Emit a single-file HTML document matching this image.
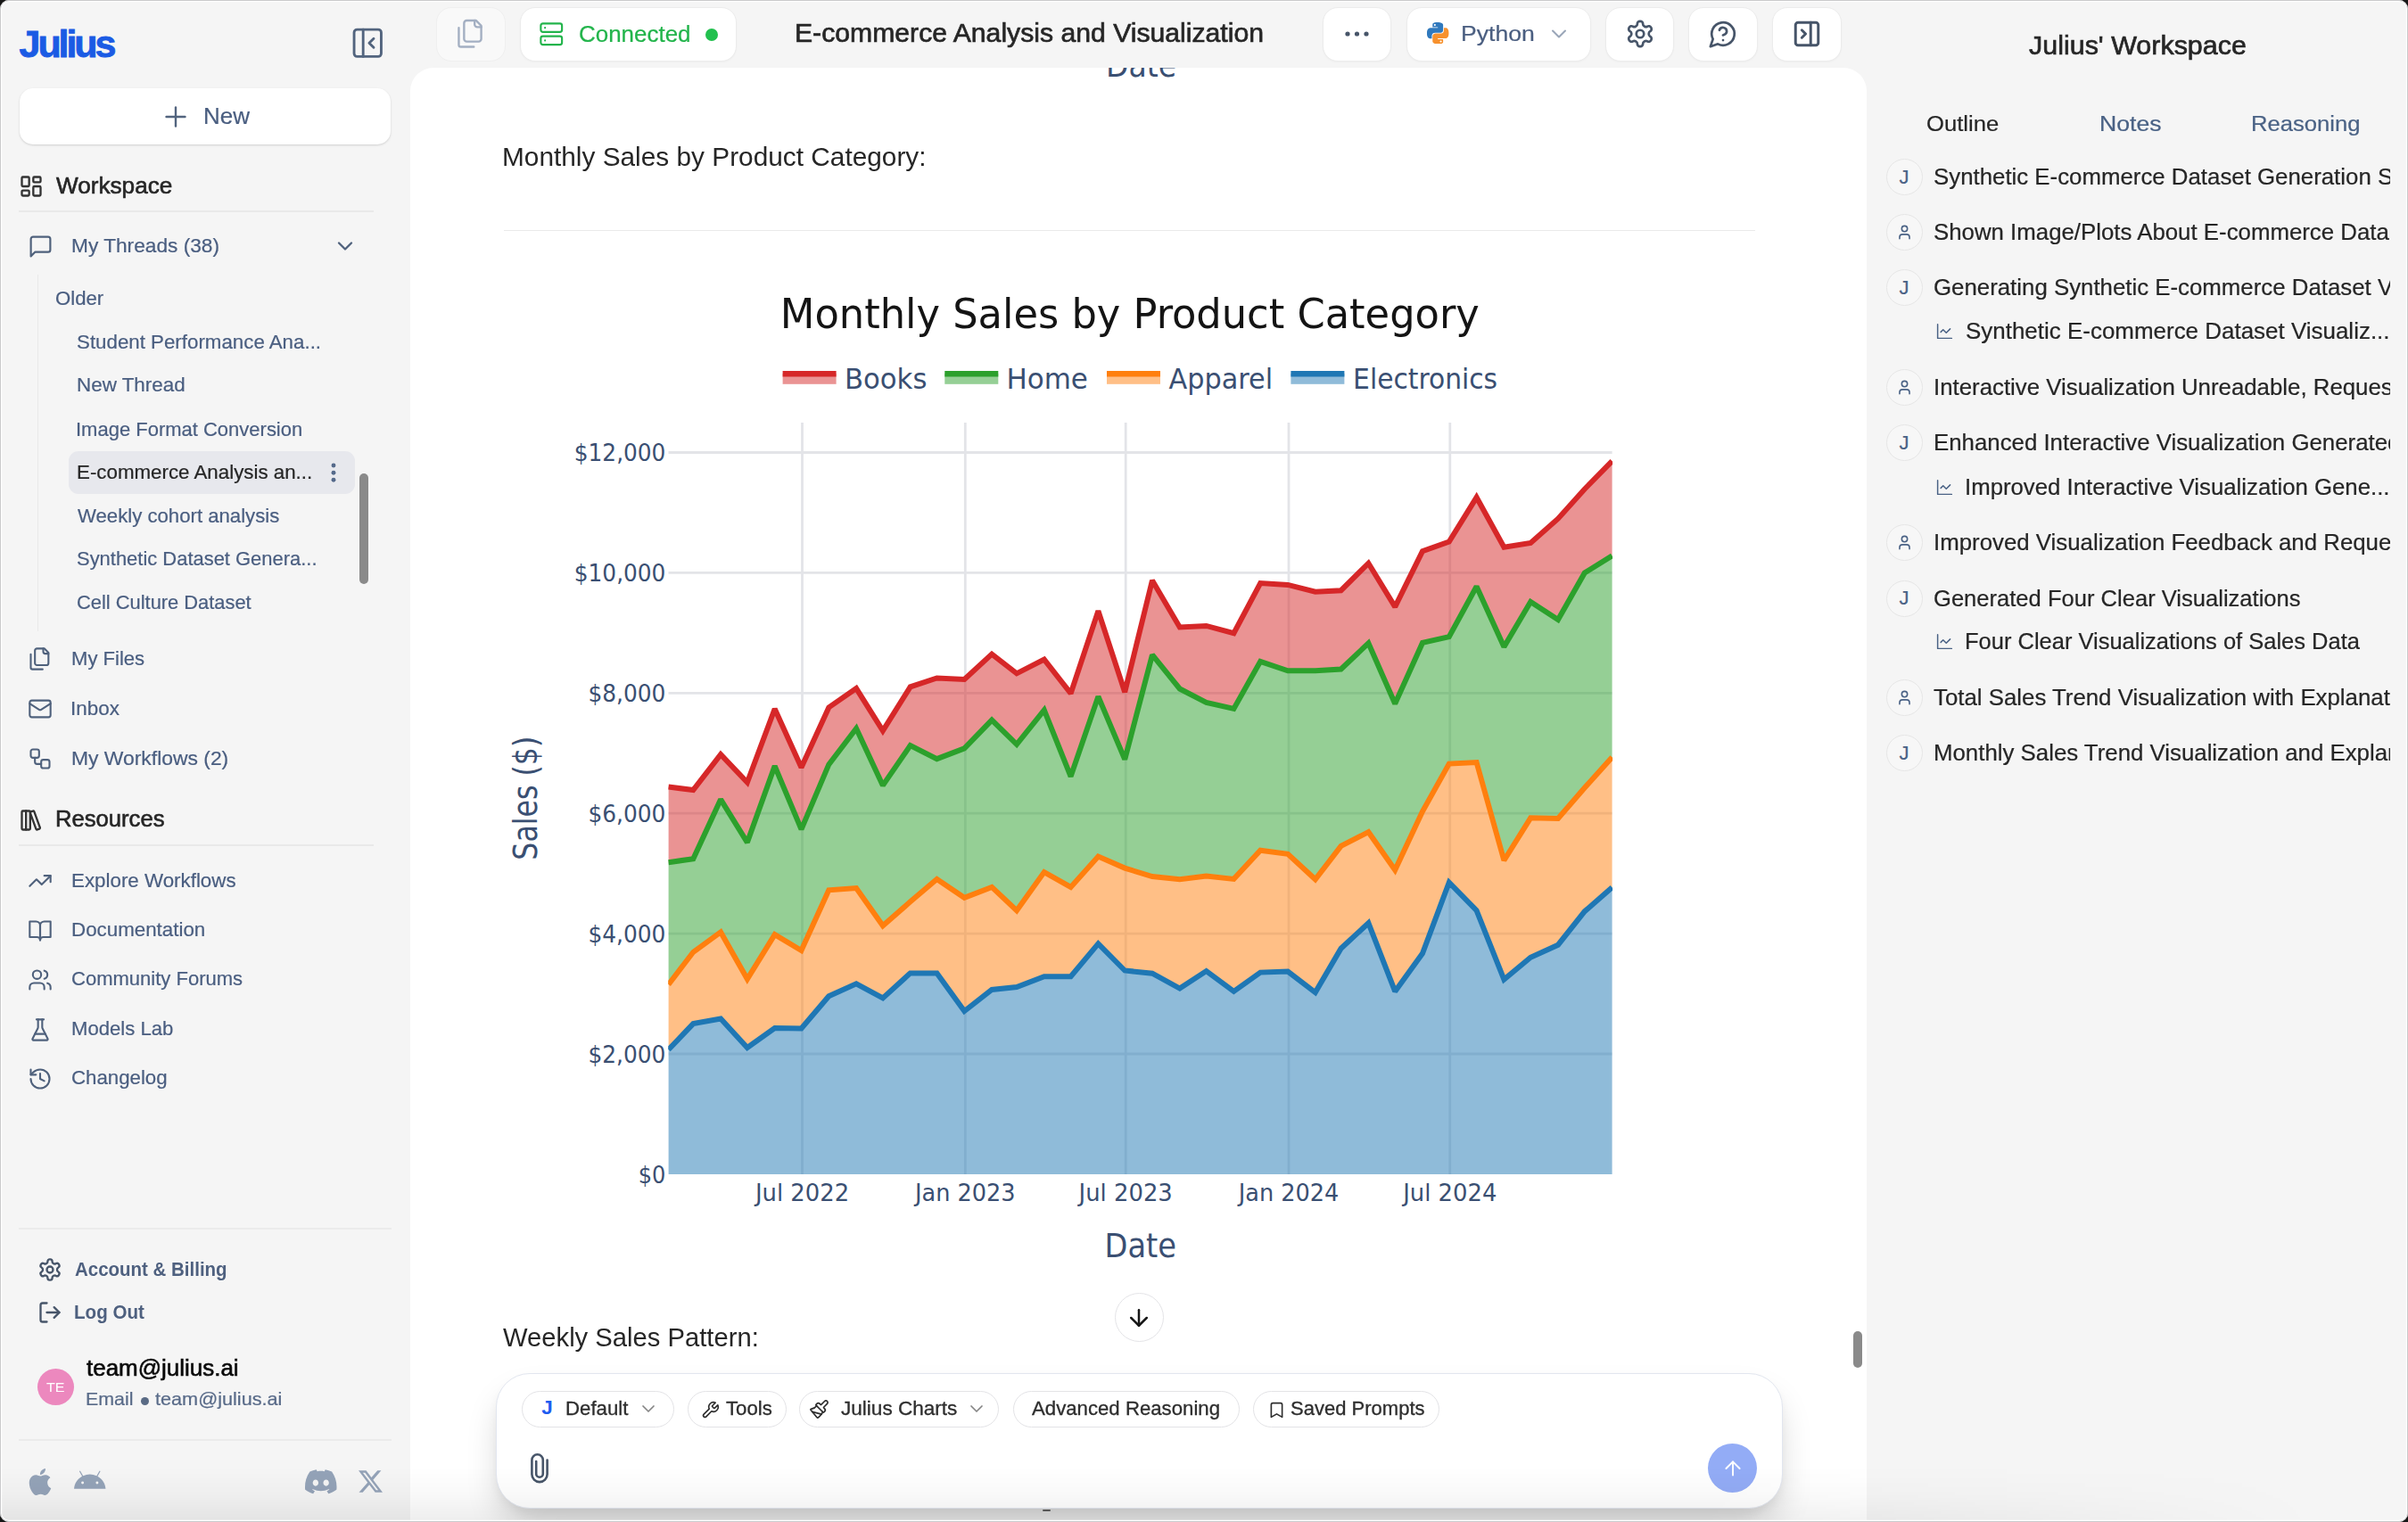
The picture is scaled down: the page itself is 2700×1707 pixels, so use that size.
<!DOCTYPE html><html lang="en"><head><meta charset="utf-8"><title>Julius - E-commerce Analysis and Visualization</title><style>
*{box-sizing:border-box}
html,body{margin:0;padding:0}
body{width:2700px;height:1707px;overflow:hidden;background:#161616;font-family:"Liberation Sans",sans-serif;position:relative}
#win{position:absolute;left:0;top:0;width:2700px;height:1707px;background:#f5f5f5;border-radius:10px;overflow:hidden}
#winb{position:absolute;left:0;top:0;width:2700px;height:1707px;border-radius:10px;border:1px solid #c9c9cb;box-shadow:inset 0 0 0 1.2px #fff;pointer-events:none}
.abs{position:absolute}
.t{position:absolute;white-space:nowrap;line-height:1;transform-origin:0 0}
#main{position:absolute;left:460px;top:76px;width:1633.3px;height:1640px;background:#fff;border-radius:26px 26px 0 0;overflow:hidden}
.btn{position:absolute;top:8px;height:61px;border-radius:17px;background:#fff;border:1.5px solid #ececec;box-shadow:0 1px 2px rgba(0,0,0,.03)}
.hr{position:absolute;height:2px;background:#e9e9e9}
.pill{position:absolute;top:1560px;height:41px;border-radius:21px;border:1.5px solid #e3e3e6;background:#fff}
.circ{position:absolute;width:41px;height:41px;border-radius:50%;border:1.5px solid #e6e6e6;background:#f7f7f7}
</style></head><body><div id="win">
<div id="main"></div>
<span class="t" id="logo" style="left:21.6px;top:27.5px;font-size:43px;color:#1b5be4;font-weight:700;-webkit-text-stroke:0.9px #1b5be4;letter-spacing:-3.1px;">Julius</span>
<svg style="position:absolute;left:391.5px;top:28.3px;" width="40.5" height="40.5" viewBox="0 0 24 24" fill="none" stroke="#52647e" stroke-width="1.7" stroke-linecap="round" stroke-linejoin="round"><rect width="18" height="18" x="3" y="3" rx="2"/><path d="M9 3v18"/><path d="m16 15-3-3 3-3"/></svg>
<div class="abs" style="left:22px;top:99px;width:416px;height:63px;border-radius:15px;background:#fff;box-shadow:0 1px 3px rgba(0,0,0,.10),0 1px 2px rgba(0,0,0,.06)"></div>
<svg style="position:absolute;left:179.2px;top:112.5px;" width="36" height="36" viewBox="0 0 24 24" fill="none" stroke="#52647e" stroke-width="1.6" stroke-linecap="round" stroke-linejoin="round"><path d="M5 12h14"/><path d="M12 5v14"/></svg>
<span class="t" id="new" style="left:227.6px;top:118.0px;font-size:25.4px;color:#4a5e80;transform:scaleX(1.0226);-webkit-text-stroke:0.22px #4a5e80;">New</span>
<svg style="position:absolute;left:20.5px;top:194.5px;" width="28" height="28" viewBox="0 0 24 24" fill="none" stroke="#333" stroke-width="2" stroke-linecap="round" stroke-linejoin="round"><rect width="7" height="9" x="3" y="3" rx="1"/><rect width="7" height="5" x="14" y="3" rx="1"/><rect width="7" height="9" x="14" y="12" rx="1"/><rect width="7" height="5" x="3" y="16" rx="1"/></svg>
<span class="t" id="ws" style="left:63.2px;top:195.9px;font-size:25.4px;color:#262626;transform:scaleX(1.0297);-webkit-text-stroke:0.6px #262626;">Workspace</span>
<div class="hr" style="left:21px;top:236.3px;width:398px;height:1.6px;background:#e9e9e9"></div>
<svg style="position:absolute;left:30.5px;top:262.0px;" width="29" height="29" viewBox="0 0 24 24" fill="none" stroke="#4f617c" stroke-width="1.8" stroke-linecap="round" stroke-linejoin="round"><path d="M21 15a2 2 0 0 1-2 2H7l-4 4V5a2 2 0 0 1 2-2h14a2 2 0 0 1 2 2z"/></svg>
<span class="t" id="thr" style="left:79.8px;top:265.0px;font-size:21.7px;color:#4a5e80;transform:scaleX(1.0461);-webkit-text-stroke:0.22px #4a5e80;">My Threads (38)</span>
<svg style="position:absolute;left:373.0px;top:262.3px;" width="28" height="28" viewBox="0 0 24 24" fill="none" stroke="#4f617c" stroke-width="2" stroke-linecap="round" stroke-linejoin="round"><path d="m6 9 6 6 6-6"/></svg>
<div class="abs" style="left:41.5px;top:308px;width:1.5px;height:400px;background:#e9e9e9"></div>
<span class="t" id="older" style="left:62.0px;top:324.3px;font-size:21.7px;color:#4a5e80;transform:scaleX(1.0204);-webkit-text-stroke:0.22px #4a5e80;">Older</span>
<div class="abs" style="left:76.5px;top:506px;width:321px;height:48px;border-radius:11px;background:#e7e8ed"></div>
<span class="t" id="th0" style="left:86.4px;top:372.6px;font-size:21.7px;color:#4a5e80;transform:scaleX(1.0285);-webkit-text-stroke:0.22px #4a5e80;">Student Performance Ana...</span>
<span class="t" id="th1" style="left:86.4px;top:421.2px;font-size:21.7px;color:#4a5e80;transform:scaleX(1.0331);-webkit-text-stroke:0.22px #4a5e80;">New Thread</span>
<span class="t" id="th2" style="left:85.4px;top:470.5px;font-size:21.7px;color:#4a5e80;transform:scaleX(1.0140);-webkit-text-stroke:0.22px #4a5e80;">Image Format Conversion</span>
<span class="t" id="th3" style="left:86.4px;top:518.9px;font-size:21.7px;color:#262626;transform:scaleX(1.0292);-webkit-text-stroke:0.22px #262626;">E-commerce Analysis an...</span>
<span class="t" id="th4" style="left:87.4px;top:567.8px;font-size:21.7px;color:#4a5e80;transform:scaleX(1.0222);-webkit-text-stroke:0.22px #4a5e80;">Weekly cohort analysis</span>
<span class="t" id="th5" style="left:86.4px;top:616.2px;font-size:21.7px;color:#4a5e80;transform:scaleX(1.0116);-webkit-text-stroke:0.22px #4a5e80;">Synthetic Dataset Genera...</span>
<span class="t" id="th6" style="left:86.4px;top:665.2px;font-size:21.7px;color:#4a5e80;transform:scaleX(1.0084);-webkit-text-stroke:0.22px #4a5e80;">Cell Culture Dataset</span>
<svg class="abs" style="left:361.8px;top:517px" width="24" height="26" viewBox="0 0 24 26"><circle cx="12" cy="5" r="2.45" fill="#54698a"/><circle cx="12" cy="13.3" r="2.45" fill="#54698a"/><circle cx="12" cy="21.3" r="2.45" fill="#54698a"/></svg>
<div class="abs" style="left:403.3px;top:531px;width:10px;height:124px;border-radius:5px;background:#8a8a8a"></div>
<svg style="position:absolute;left:30.5px;top:725.0px;" width="28" height="28" viewBox="0 0 24 24" fill="none" stroke="#4f617c" stroke-width="1.8" stroke-linecap="round" stroke-linejoin="round"><path d="M20 7h-3a2 2 0 0 1-2-2V2"/><path d="M9 18a2 2 0 0 1-2-2V4a2 2 0 0 1 2-2h7l4 4v10a2 2 0 0 1-2 2Z"/><path d="M3 7.6v12.8A1.6 1.6 0 0 0 4.6 22h9.8"/></svg>
<span class="t" id="nav0" style="left:79.8px;top:727.9px;font-size:21.7px;color:#4a5e80;transform:scaleX(1.0173);-webkit-text-stroke:0.22px #4a5e80;">My Files</span>
<svg style="position:absolute;left:30.5px;top:780.7px;" width="28" height="28" viewBox="0 0 24 24" fill="none" stroke="#4f617c" stroke-width="1.8" stroke-linecap="round" stroke-linejoin="round"><rect width="20" height="16" x="2" y="4" rx="2"/><path d="m22 7-8.97 5.7a1.94 1.94 0 0 1-2.06 0L2 7"/></svg>
<span class="t" id="nav1" style="left:78.8px;top:783.6px;font-size:21.7px;color:#4a5e80;transform:scaleX(1.0342);-webkit-text-stroke:0.22px #4a5e80;">Inbox</span>
<svg style="position:absolute;left:30.5px;top:836.6px;" width="28" height="28" viewBox="0 0 24 24" fill="none" stroke="#4f617c" stroke-width="1.8" stroke-linecap="round" stroke-linejoin="round"><rect width="8" height="8" x="3" y="3" rx="2"/><path d="M7 11v4a2 2 0 0 0 2 2h4"/><rect width="8" height="8" x="13" y="13" rx="2"/></svg>
<span class="t" id="nav2" style="left:79.8px;top:839.5px;font-size:21.7px;color:#4a5e80;transform:scaleX(1.0547);-webkit-text-stroke:0.22px #4a5e80;">My Workflows (2)</span>
<svg style="position:absolute;left:20.5px;top:905.5px;" width="28" height="28" viewBox="0 0 24 24" fill="none" stroke="#333" stroke-width="2" stroke-linecap="round" stroke-linejoin="round"><rect width="8" height="18" x="3" y="3" rx="1"/><path d="M7 3v18"/><path d="M20.4 18.9c.2.5-.1 1.1-.6 1.3l-1.9.7c-.5.2-1.1-.1-1.3-.6L11.1 5.1c-.2-.5.1-1.1.6-1.3l1.9-.7c.5-.2 1.1.1 1.3.6Z"/></svg>
<span class="t" id="res" style="left:61.8px;top:906.3px;font-size:25.4px;color:#262626;transform:scaleX(1.0094);-webkit-text-stroke:0.6px #262626;">Resources</span>
<div class="hr" style="left:21px;top:947.3px;width:398px;height:1.6px;background:#e9e9e9"></div>
<svg style="position:absolute;left:30.5px;top:973.9px;" width="28" height="28" viewBox="0 0 24 24" fill="none" stroke="#4f617c" stroke-width="1.8" stroke-linecap="round" stroke-linejoin="round"><polyline points="22 7 13.5 15.5 8.5 10.5 2 17"/><polyline points="16 7 22 7 22 13"/></svg>
<span class="t" id="nv20" style="left:79.8px;top:976.5px;font-size:21.7px;color:#4a5e80;transform:scaleX(1.0303);-webkit-text-stroke:0.22px #4a5e80;">Explore Workflows</span>
<svg style="position:absolute;left:30.5px;top:1029.5px;" width="28" height="28" viewBox="0 0 24 24" fill="none" stroke="#4f617c" stroke-width="1.8" stroke-linecap="round" stroke-linejoin="round"><path d="M2 3h6a4 4 0 0 1 4 4v14a3 3 0 0 0-3-3H2z"/><path d="M22 3h-6a4 4 0 0 0-4 4v14a3 3 0 0 1 3-3h7z"/></svg>
<span class="t" id="nv21" style="left:79.8px;top:1032.1px;font-size:21.7px;color:#4a5e80;transform:scaleX(1.0298);-webkit-text-stroke:0.22px #4a5e80;">Documentation</span>
<svg style="position:absolute;left:30.5px;top:1084.8px;" width="28" height="28" viewBox="0 0 24 24" fill="none" stroke="#4f617c" stroke-width="1.8" stroke-linecap="round" stroke-linejoin="round"><path d="M16 21v-2a4 4 0 0 0-4-4H6a4 4 0 0 0-4 4v2"/><circle cx="9" cy="7" r="4"/><path d="M22 21v-2a4 4 0 0 0-3-3.87"/><path d="M16 3.13a4 4 0 0 1 0 7.75"/></svg>
<span class="t" id="nv22" style="left:79.8px;top:1087.4px;font-size:21.7px;color:#4a5e80;transform:scaleX(1.0154);-webkit-text-stroke:0.22px #4a5e80;">Community Forums</span>
<svg style="position:absolute;left:30.5px;top:1140.7px;" width="28" height="28" viewBox="0 0 24 24" fill="none" stroke="#4f617c" stroke-width="1.8" stroke-linecap="round" stroke-linejoin="round"><path d="M10 2v7.527a2 2 0 0 1-.211.896L4.72 20.55a1 1 0 0 0 .9 1.45h12.76a1 1 0 0 0 .9-1.45l-5.069-10.127A2 2 0 0 1 14 9.527V2"/><path d="M8.5 2h7"/><path d="M7 16h10"/></svg>
<span class="t" id="nv23" style="left:79.8px;top:1143.3px;font-size:21.7px;color:#4a5e80;transform:scaleX(1.0195);-webkit-text-stroke:0.22px #4a5e80;">Models Lab</span>
<svg style="position:absolute;left:30.5px;top:1195.7px;" width="28" height="28" viewBox="0 0 24 24" fill="none" stroke="#4f617c" stroke-width="1.8" stroke-linecap="round" stroke-linejoin="round"><path d="M3 12a9 9 0 1 0 9-9 9.75 9.75 0 0 0-6.74 2.74L3 8"/><path d="M3 3v5h5"/><path d="M12 7v5l4 2"/></svg>
<span class="t" id="nv24" style="left:79.8px;top:1198.3px;font-size:21.7px;color:#4a5e80;transform:scaleX(1.0251);-webkit-text-stroke:0.22px #4a5e80;">Changelog</span>
<div class="hr" style="left:21px;top:1376.5px;width:418px;background:#ebebeb"></div>
<svg style="position:absolute;left:41.5px;top:1409.5px;" width="28" height="28" viewBox="0 0 24 24" fill="none" stroke="#475569" stroke-width="2" stroke-linecap="round" stroke-linejoin="round"><path d="M12.22 2h-.44a2 2 0 0 0-2 2v.18a2 2 0 0 1-1 1.73l-.43.25a2 2 0 0 1-2 0l-.15-.08a2 2 0 0 0-2.73.73l-.22.38a2 2 0 0 0 .73 2.73l.15.1a2 2 0 0 1 1 1.72v.51a2 2 0 0 1-1 1.74l-.15.09a2 2 0 0 0-.73 2.73l.22.38a2 2 0 0 0 2.73.73l.15-.08a2 2 0 0 1 2 0l.43.25a2 2 0 0 1 1 1.73V20a2 2 0 0 0 2 2h.44a2 2 0 0 0 2-2v-.18a2 2 0 0 1 1-1.73l.43-.25a2 2 0 0 1 2 0l.15.08a2 2 0 0 0 2.73-.73l.22-.39a2 2 0 0 0-.73-2.73l-.15-.08a2 2 0 0 1-1-1.74v-.5a2 2 0 0 1 1-1.74l.15-.09a2 2 0 0 0 .73-2.73l-.22-.38a2 2 0 0 0-2.73-.73l-.15.08a2 2 0 0 1-2 0l-.43-.25a2 2 0 0 1-1-1.73V4a2 2 0 0 0-2-2z"/><circle cx="12" cy="12" r="3"/></svg>
<span class="t" id="acct" style="left:83.8px;top:1412.5px;font-size:21.7px;color:#4e607f;font-weight:700;transform:scaleX(0.9440);">Account &amp; Billing</span>
<svg style="position:absolute;left:41.5px;top:1458.0px;" width="28" height="28" viewBox="0 0 24 24" fill="none" stroke="#475569" stroke-width="2" stroke-linecap="round" stroke-linejoin="round"><path d="M9 21H5a2 2 0 0 1-2-2V5a2 2 0 0 1 2-2h4"/><polyline points="16 17 21 12 16 7"/><line x1="21" x2="9" y1="12" y2="12"/></svg>
<span class="t" id="logout" style="left:82.8px;top:1460.7px;font-size:21.7px;color:#4e607f;font-weight:700;transform:scaleX(0.9483);">Log Out</span>
<div class="abs" style="left:42px;top:1535px;width:41px;height:41px;border-radius:50%;background:#ec88be"></div>
<span class="t" id="te" style="left:52.0px;top:1548.4px;font-size:15.5px;color:#fff;transform:scaleX(1.0367);">TE</span>
<span class="t" id="team" style="left:97.4px;top:1521.7px;font-size:25.4px;color:#0a0a0a;transform:scaleX(1.0222);-webkit-text-stroke:0.6px #0a0a0a;">team@julius.ai</span>
<span class="t" id="email" style="left:96.2px;top:1558.9px;font-size:20.6px;color:#586a88;transform:scaleX(1.0380);-webkit-text-stroke:0.22px #586a88;">Email</span>
<div class="abs" style="left:157.5px;top:1566.5px;width:9px;height:9px;border-radius:50%;background:#5a6b85"></div>
<span class="t" id="team2" style="left:174.0px;top:1558.9px;font-size:20.6px;color:#586a88;transform:scaleX(1.0519);-webkit-text-stroke:0.22px #586a88;">team@julius.ai</span>
<div class="hr" style="left:21px;top:1614px;width:418px;background:#ebebeb"></div>
<svg class="abs" style="left:30px;top:1646.5px" width="30" height="30" viewBox="0 0 24 24"><path fill="#94a3b8" d="M12.152 6.896c-.948 0-2.415-1.078-3.96-1.04-2.04.027-3.91 1.183-4.961 3.014-2.117 3.675-.546 9.103 1.519 12.09 1.013 1.454 2.208 3.09 3.792 3.039 1.52-.065 2.09-.987 3.935-.987 1.831 0 2.35.987 3.96.948 1.637-.026 2.676-1.48 3.676-2.948 1.156-1.688 1.636-3.325 1.662-3.415-.039-.013-3.182-1.221-3.22-4.857-.026-3.04 2.48-4.494 2.597-4.559-1.429-2.09-3.623-2.324-4.39-2.376-2-.156-3.675 1.09-4.61 1.09zM15.53 3.83c.843-1.012 1.4-2.427 1.245-3.83-1.207.052-2.662.805-3.532 1.818-.78.896-1.454 2.338-1.273 3.714 1.338.104 2.715-.688 3.559-1.701"/></svg>
<svg class="abs" style="left:83px;top:1645.8px" width="35.5" height="31.5" viewBox="0 0 576 512"><path fill="#94a3b8" d="M420.55,301.93a24,24,0,1,1,24-24,24,24,0,0,1-24,24m-265.1,0a24,24,0,1,1,24-24,24,24,0,0,1-24,24m273.7-144.48,47.94-83a10,10,0,1,0-17.27-10h0l-48.54,84.07a301.25,301.25,0,0,0-246.56,0L116.18,64.45a10,10,0,1,0-17.27,10h0l47.94,83C64.53,202.22,8.24,285.55,0,384H576c-8.24-98.45-64.54-181.78-146.85-226.55"/></svg>
<svg class="abs" style="left:342px;top:1643.5px" width="35.5" height="35.5" viewBox="0 0 24 24"><path fill="#94a3b8" d="M20.317 4.3698a19.7913 19.7913 0 00-4.8851-1.5152.0741.0741 0 00-.0785.0371c-.211.3753-.4447.8648-.6083 1.2495-1.8447-.2762-3.68-.2762-5.4868 0-.1636-.3933-.4058-.8742-.6177-1.2495a.077.077 0 00-.0785-.037 19.7363 19.7363 0 00-4.8852 1.515.0699.0699 0 00-.0321.0277C.5334 9.0458-.319 13.5799.0992 18.0578a.0824.0824 0 00.0312.0561c2.0528 1.5076 4.0413 2.4228 5.9929 3.0294a.0777.0777 0 00.0842-.0276c.4616-.6304.8731-1.2952 1.226-1.9942a.076.076 0 00-.0416-.1057c-.6528-.2476-1.2743-.5495-1.8722-.8923a.077.077 0 01-.0076-.1277c.1258-.0943.2517-.1923.3718-.2914a.0743.0743 0 01.0776-.0105c3.9278 1.7933 8.18 1.7933 12.0614 0a.0739.0739 0 01.0785.0095c.1202.099.246.1981.3728.2924a.077.077 0 01-.0066.1276 12.2986 12.2986 0 01-1.873.8914.0766.0766 0 00-.0407.1067c.3604.698.7719 1.3628 1.225 1.9932a.076.076 0 00.0842.0286c1.961-.6067 3.9495-1.5219 6.0023-3.0294a.077.077 0 00.0313-.0552c.5004-5.177-.8382-9.6739-3.5485-13.6604a.061.061 0 00-.0312-.0286zM8.02 15.3312c-1.1825 0-2.1569-1.0857-2.1569-2.419 0-1.3332.9555-2.4189 2.157-2.4189 1.2108 0 2.1757 1.0952 2.1568 2.419 0 1.3332-.9555 2.4189-2.1569 2.4189zm7.9748 0c-1.1825 0-2.1569-1.0857-2.1569-2.419 0-1.3332.9554-2.4189 2.1569-2.4189 1.2108 0 2.1757 1.0952 2.1568 2.419 0 1.3332-.946 2.4189-2.1568 2.4189Z"/></svg>
<svg class="abs" style="left:401.5px;top:1648px" width="27" height="27" viewBox="0 0 24 24"><path fill="#94a3b8" d="M18.901 1.153h3.68l-8.04 9.19L24 22.846h-7.406l-5.8-7.584-6.638 7.584H.474l8.6-9.83L0 1.154h7.594l5.243 6.932ZM17.61 20.644h2.039L6.486 3.24H4.298Z"/></svg>
<div class="btn" style="left:489.3px;width:78px;background:#f9f9f9;border-color:#efefef;box-shadow:none"></div>
<svg style="position:absolute;left:510.3px;top:20.3px;" width="35.5" height="35.5" viewBox="0 0 24 24" fill="none" stroke="#a3afc2" stroke-width="1.6" stroke-linecap="round" stroke-linejoin="round"><path d="M20 7h-3a2 2 0 0 1-2-2V2"/><path d="M9 18a2 2 0 0 1-2-2V4a2 2 0 0 1 2-2h7l4 4v10a2 2 0 0 1-2 2Z"/><path d="M3 7.6v12.8A1.6 1.6 0 0 0 4.6 22h9.8"/></svg>
<div class="btn" style="left:583.2px;width:243px"></div>
<svg style="position:absolute;left:604.2px;top:24.2px;" width="28.5" height="28.5" viewBox="0 0 24 24" fill="none" stroke="#22b44b" stroke-width="1.8" stroke-linecap="round" stroke-linejoin="round"><rect width="20" height="8" x="2" y="2" rx="2" ry="2"/><rect width="20" height="8" x="2" y="14" rx="2" ry="2"/><line x1="6" x2="6.01" y1="6" y2="6"/><line x1="6" x2="6.01" y1="18" y2="18"/></svg>
<span class="t" id="conn" style="left:648.8px;top:25.6px;font-size:24.9px;color:#22b44b;transform:scaleX(1.0427);-webkit-text-stroke:0.22px #22b44b;">Connected</span>
<div class="abs" style="left:790.5px;top:31.5px;width:14px;height:14px;border-radius:50%;background:#22c04e"></div>
<span class="t" id="title" style="left:890.6px;top:22.9px;font-size:29.2px;color:#262626;transform:scaleX(1.0337);-webkit-text-stroke:0.65px #262626;">E-commerce Analysis and Visualization</span>
<div class="btn" style="left:1482.5px;width:77.5px"></div>
<svg class="abs" style="left:1506px;top:33px" width="32" height="10" viewBox="0 0 32 10"><circle cx="5" cy="5" r="2.6" fill="#475569"/><circle cx="15.5" cy="5" r="2.6" fill="#475569"/><circle cx="26" cy="5" r="2.6" fill="#475569"/></svg>
<div class="btn" style="left:1576.5px;width:207px"></div>
<svg class="abs" style="left:1600.3px;top:24.6px" width="24.4" height="24.4" viewBox="0 0 24 24"><path fill="#3079bd" fill-rule="evenodd" d="M14.25.18l.9.2.73.26.59.3.45.32.34.34.25.34.16.33.1.3.04.26.02.2-.01.13V8.5l-.05.63-.13.55-.21.46-.26.38-.3.31-.33.25-.35.19-.35.14-.33.1-.3.07-.26.04-.21.02H8.77l-.69.05-.59.14-.5.22-.41.27-.33.32-.27.35-.2.36-.15.37-.1.35-.07.32-.04.27-.02.21v3.06H3.17l-.21-.03-.28-.07-.32-.12-.35-.18-.36-.26-.36-.36-.35-.46-.32-.59-.28-.73-.21-.88-.14-1.05-.05-1.23.06-1.22.16-1.04.24-.87.32-.71.36-.57.4-.44.42-.33.42-.24.4-.16.36-.1.32-.05.24-.01h.16l.06.01h8.16v-.83H6.18l-.01-2.75-.02-.37.05-.34.11-.31.17-.28.25-.26.31-.23.38-.2.44-.18.51-.15.58-.12.64-.1.71-.06.77-.04.84-.02 1.27.05zM7.95 2.16l-.23.33-.08.41.08.41.23.34.33.22.41.09.41-.09.33-.22.23-.34.08-.41-.08-.41-.23-.33-.33-.22-.41-.09-.41.09z"/><path fill="#f7912d" fill-rule="evenodd" d="M21.04 6.11l.28.06.32.12.35.18.36.27.36.35.35.47.32.59.28.73.21.88.14 1.04.05 1.23-.06 1.23-.16 1.04-.24.86-.32.71-.36.57-.4.45-.42.33-.42.24-.4.16-.36.09-.32.05-.24.02-.16-.01h-8.22v.82h5.84l.01 2.76.02.36-.05.34-.11.31-.17.29-.25.25-.31.24-.38.2-.44.17-.51.15-.58.13-.64.09-.71.07-.77.04-.84.01-1.27-.04-1.07-.14-.9-.2-.73-.25-.59-.3-.45-.33-.34-.34-.25-.34-.16-.33-.1-.3-.04-.25-.02-.2.01-.13v-5.34l.05-.64.13-.54.21-.46.26-.38.3-.32.33-.24.35-.2.35-.14.33-.1.3-.06.26-.04.21-.02.13-.01h5.84l.69-.05.59-.14.5-.21.41-.28.33-.32.27-.35.2-.36.15-.36.1-.35.07-.32.04-.28.02-.21V6.07h2.09l.14.01zM14.57 20.36l-.23.33-.08.41.08.41.23.33.33.23.41.08.41-.08.33-.23.23-.33.08-.41-.08-.41-.23-.33-.33-.23-.41-.08-.41.08z"/></svg>
<span class="t" id="py" style="left:1638.2px;top:25.9px;font-size:24.8px;color:#4a5e80;transform:scaleX(1.0718);-webkit-text-stroke:0.22px #4a5e80;">Python</span>
<svg style="position:absolute;left:1734.0px;top:24.0px;" width="28" height="28" viewBox="0 0 24 24" fill="none" stroke="#9aa6b8" stroke-width="1.8" stroke-linecap="round" stroke-linejoin="round"><path d="m6 9 6 6 6-6"/></svg>
<div class="btn" style="left:1799.5px;width:77.5px"></div>
<svg style="position:absolute;left:1821.5px;top:21.0px;" width="34" height="34" viewBox="0 0 24 24" fill="none" stroke="#475569" stroke-width="1.9" stroke-linecap="round" stroke-linejoin="round"><path d="M12.22 2h-.44a2 2 0 0 0-2 2v.18a2 2 0 0 1-1 1.73l-.43.25a2 2 0 0 1-2 0l-.15-.08a2 2 0 0 0-2.73.73l-.22.38a2 2 0 0 0 .73 2.73l.15.1a2 2 0 0 1 1 1.72v.51a2 2 0 0 1-1 1.74l-.15.09a2 2 0 0 0-.73 2.73l.22.38a2 2 0 0 0 2.73.73l.15-.08a2 2 0 0 1 2 0l.43.25a2 2 0 0 1 1 1.73V20a2 2 0 0 0 2 2h.44a2 2 0 0 0 2-2v-.18a2 2 0 0 1 1-1.73l.43-.25a2 2 0 0 1 2 0l.15.08a2 2 0 0 0 2.73-.73l.22-.39a2 2 0 0 0-.73-2.73l-.15-.08a2 2 0 0 1-1-1.74v-.5a2 2 0 0 1 1-1.74l.15-.09a2 2 0 0 0 .73-2.73l-.22-.38a2 2 0 0 0-2.73-.73l-.15.08a2 2 0 0 1-2 0l-.43-.25a2 2 0 0 1-1-1.73V4a2 2 0 0 0-2-2z"/><circle cx="12" cy="12" r="3"/></svg>
<div class="btn" style="left:1893px;width:77.5px"></div>
<svg style="position:absolute;left:1914.5px;top:21.0px;" width="34" height="34" viewBox="0 0 24 24" fill="none" stroke="#475569" stroke-width="1.9" stroke-linecap="round" stroke-linejoin="round"><path d="M7.9 20A9 9 0 1 0 4 16.1L2 22Z"/><path d="M9.09 9a3 3 0 0 1 5.83 1c0 2-3 3-3 3"/><path d="M12 17h.01"/></svg>
<div class="btn" style="left:1987px;width:77.5px"></div>
<svg style="position:absolute;left:2008.5px;top:21.0px;" width="34" height="34" viewBox="0 0 24 24" fill="none" stroke="#475569" stroke-width="2.1" stroke-linecap="round" stroke-linejoin="round"><rect width="18" height="18" x="3" y="3" rx="2"/><path d="M15 3v18"/><path d="m8 9 3 3-3 3"/></svg>
<span class="t" id="jw" style="left:2275.0px;top:36.7px;font-size:29.2px;color:#262626;transform:scaleX(1.0434);-webkit-text-stroke:0.65px #262626;">Julius' Workspace</span>
<span class="t" id="tab0" style="left:2160.2px;top:126.5px;font-size:24.8px;color:#262626;transform:scaleX(1.0352);-webkit-text-stroke:0.22px #262626;">Outline</span>
<span class="t" id="tab1" style="left:2354.2px;top:126.5px;font-size:24.8px;color:#4a6285;transform:scaleX(1.0747);-webkit-text-stroke:0.22px #4a6285;">Notes</span>
<span class="t" id="tab2" style="left:2523.8px;top:126.5px;font-size:24.8px;color:#4a6285;transform:scaleX(1.0331);-webkit-text-stroke:0.22px #4a6285;">Reasoning</span>
<div class="abs" id="rp" style="left:2100px;top:160px;width:580px;height:760px;overflow:hidden">
<div class="circ" style="left:15px;top:17.900000000000006px"></div>
<span class="t" id="oj0" style="left:29.6px;top:27.6px;font-size:22px;color:#4a6285;-webkit-text-stroke:0.22px #4a6285;">J</span>
<span class="t" id="o0" style="left:68.4px;top:25.9px;font-size:25.2px;color:#262626;transform:scaleX(1.0250);-webkit-text-stroke:0.22px #262626;">Synthetic E-commerce Dataset Generation Summary</span>
<div class="circ" style="left:15px;top:80.10000000000002px"></div>
<svg style="position:absolute;left:26.0px;top:91.1px;" width="19" height="19" viewBox="0 0 24 24" fill="none" stroke="#4a6285" stroke-width="2" stroke-linecap="round" stroke-linejoin="round"><path d="M19 21v-2a4 4 0 0 0-4-4H9a4 4 0 0 0-4 4v2"/><circle cx="12" cy="7" r="4"/></svg>
<span class="t" id="o1" style="left:68.4px;top:88.1px;font-size:25.2px;color:#262626;transform:scaleX(1.0250);-webkit-text-stroke:0.22px #262626;">Shown Image/Plots About E-commerce Data</span>
<div class="circ" style="left:15px;top:142.39999999999998px"></div>
<span class="t" id="oj2" style="left:29.6px;top:152.1px;font-size:22px;color:#4a6285;-webkit-text-stroke:0.22px #4a6285;">J</span>
<span class="t" id="o2" style="left:68.4px;top:150.4px;font-size:25.2px;color:#262626;transform:scaleX(1.0250);-webkit-text-stroke:0.22px #262626;">Generating Synthetic E-commerce Dataset Visualizations</span>
<svg style="position:absolute;left:69.5px;top:201.3px;" width="21" height="21" viewBox="0 0 24 24" fill="none" stroke="#4a6285" stroke-width="1.7" stroke-linecap="round" stroke-linejoin="round"><path d="M3 3v18h18"/><path d="m19 9-5 5-4-4-3 3"/></svg>
<span class="t" id="o3" style="left:103.6px;top:199.3px;font-size:25.2px;color:#262626;transform:scaleX(1.0304);-webkit-text-stroke:0.22px #262626;">Synthetic E-commerce Dataset Visualiz...</span>
<div class="circ" style="left:15px;top:254.10000000000002px"></div>
<svg style="position:absolute;left:26.0px;top:265.1px;" width="19" height="19" viewBox="0 0 24 24" fill="none" stroke="#4a6285" stroke-width="2" stroke-linecap="round" stroke-linejoin="round"><path d="M19 21v-2a4 4 0 0 0-4-4H9a4 4 0 0 0-4 4v2"/><circle cx="12" cy="7" r="4"/></svg>
<span class="t" id="o4" style="left:68.4px;top:262.1px;font-size:25.2px;color:#262626;transform:scaleX(1.0250);-webkit-text-stroke:0.22px #262626;">Interactive Visualization Unreadable, Request for Fix</span>
<div class="circ" style="left:15px;top:316.3px"></div>
<span class="t" id="oj5" style="left:29.6px;top:326.0px;font-size:22px;color:#4a6285;-webkit-text-stroke:0.22px #4a6285;">J</span>
<span class="t" id="o5" style="left:68.4px;top:324.3px;font-size:25.2px;color:#262626;transform:scaleX(1.0250);-webkit-text-stroke:0.22px #262626;">Enhanced Interactive Visualization Generated</span>
<svg style="position:absolute;left:69.5px;top:375.9px;" width="21" height="21" viewBox="0 0 24 24" fill="none" stroke="#4a6285" stroke-width="1.7" stroke-linecap="round" stroke-linejoin="round"><path d="M3 3v18h18"/><path d="m19 9-5 5-4-4-3 3"/></svg>
<span class="t" id="o6" style="left:102.6px;top:373.9px;font-size:25.2px;color:#262626;transform:scaleX(1.0231);-webkit-text-stroke:0.22px #262626;">Improved Interactive Visualization Gene...</span>
<div class="circ" style="left:15px;top:427.79999999999995px"></div>
<svg style="position:absolute;left:26.0px;top:438.8px;" width="19" height="19" viewBox="0 0 24 24" fill="none" stroke="#4a6285" stroke-width="2" stroke-linecap="round" stroke-linejoin="round"><path d="M19 21v-2a4 4 0 0 0-4-4H9a4 4 0 0 0-4 4v2"/><circle cx="12" cy="7" r="4"/></svg>
<span class="t" id="o7" style="left:68.4px;top:435.8px;font-size:25.2px;color:#262626;transform:scaleX(1.0250);-webkit-text-stroke:0.22px #262626;">Improved Visualization Feedback and Request</span>
<div class="circ" style="left:15px;top:490.5px"></div>
<span class="t" id="oj8" style="left:29.6px;top:500.2px;font-size:22px;color:#4a6285;-webkit-text-stroke:0.22px #4a6285;">J</span>
<span class="t" id="o8" style="left:68.4px;top:498.5px;font-size:25.2px;color:#262626;transform:scaleX(1.0149);-webkit-text-stroke:0.22px #262626;">Generated Four Clear Visualizations</span>
<svg style="position:absolute;left:69.5px;top:548.8px;" width="21" height="21" viewBox="0 0 24 24" fill="none" stroke="#4a6285" stroke-width="1.7" stroke-linecap="round" stroke-linejoin="round"><path d="M3 3v18h18"/><path d="m19 9-5 5-4-4-3 3"/></svg>
<span class="t" id="o9" style="left:102.6px;top:546.8px;font-size:25.2px;color:#262626;transform:scaleX(1.0118);-webkit-text-stroke:0.22px #262626;">Four Clear Visualizations of Sales Data</span>
<div class="circ" style="left:15px;top:601.7px"></div>
<svg style="position:absolute;left:26.0px;top:612.7px;" width="19" height="19" viewBox="0 0 24 24" fill="none" stroke="#4a6285" stroke-width="2" stroke-linecap="round" stroke-linejoin="round"><path d="M19 21v-2a4 4 0 0 0-4-4H9a4 4 0 0 0-4 4v2"/><circle cx="12" cy="7" r="4"/></svg>
<span class="t" id="o10" style="left:68.4px;top:609.7px;font-size:25.2px;color:#262626;transform:scaleX(1.0250);-webkit-text-stroke:0.22px #262626;">Total Sales Trend Visualization with Explanation</span>
<div class="circ" style="left:15px;top:664.2px"></div>
<span class="t" id="oj11" style="left:29.6px;top:673.9px;font-size:22px;color:#4a6285;-webkit-text-stroke:0.22px #4a6285;">J</span>
<span class="t" id="o11" style="left:68.4px;top:672.2px;font-size:25.2px;color:#262626;transform:scaleX(1.0250);-webkit-text-stroke:0.22px #262626;">Monthly Sales Trend Visualization and Explanation</span>
</div>
<div class="abs" style="left:461px;top:76px;width:1632.3px;height:1631px;overflow:hidden;border-radius:26px 26px 0 0">
<svg class="abs" style="left:0;top:0" width="1633" height="1631" viewBox="0 0 1633 1631" font-family='"DejaVu Sans Condensed","DejaVu Sans",sans-serif'>
<text x="818.6" y="9.6" font-size="37.2" text-anchor="middle" fill="#3a4f72" textLength="79.0" lengthAdjust="spacingAndGlyphs">Date</text>
<line x1="438.5" x2="438.5" y1="398.0" y2="1240.9" stroke="#e3e4e8" stroke-width="2.8"/>
<line x1="621.3" x2="621.3" y1="398.0" y2="1240.9" stroke="#e3e4e8" stroke-width="2.8"/>
<line x1="801.2" x2="801.2" y1="398.0" y2="1240.9" stroke="#e3e4e8" stroke-width="2.8"/>
<line x1="984.0" x2="984.0" y1="398.0" y2="1240.9" stroke="#e3e4e8" stroke-width="2.8"/>
<line x1="1164.8" x2="1164.8" y1="398.0" y2="1240.9" stroke="#e3e4e8" stroke-width="2.8"/>
<line x1="288.5" x2="1346.6" y1="1106.0" y2="1106.0" stroke="#e3e4e8" stroke-width="2.8"/>
<line x1="288.5" x2="1346.6" y1="971.1" y2="971.1" stroke="#e3e4e8" stroke-width="2.8"/>
<line x1="288.5" x2="1346.6" y1="836.2" y2="836.2" stroke="#e3e4e8" stroke-width="2.8"/>
<line x1="288.5" x2="1346.6" y1="701.3" y2="701.3" stroke="#e3e4e8" stroke-width="2.8"/>
<line x1="288.5" x2="1346.6" y1="566.4" y2="566.4" stroke="#e3e4e8" stroke-width="2.8"/>
<line x1="288.5" x2="1346.6" y1="431.5" y2="431.5" stroke="#e3e4e8" stroke-width="2.8"/>
<defs><clipPath id="plotclip"><rect x="288.2" y="398.0" width="1058.9" height="842.9"/></clipPath></defs><g clip-path="url(#plotclip)">
<polygon points="288.5,1101.3 316.3,1072.1 347.1,1066.5 376.9,1099.0 407.7,1077.1 437.5,1077.5 468.3,1041.2 499.1,1027.3 528.9,1043.4 559.7,1015.4 589.5,1015.4 620.3,1058.0 651.1,1034.0 679.0,1031.1 709.8,1019.2 739.6,1019.2 770.4,982.4 800.2,1012.5 831.0,1015.7 861.8,1032.6 891.6,1013.1 922.4,1035.9 952.2,1014.6 983.0,1013.5 1013.8,1037.1 1042.6,987.7 1073.4,959.2 1103.2,1035.9 1134.0,993.3 1163.8,913.7 1194.6,945.1 1225.4,1022.5 1255.2,997.8 1286.0,983.7 1315.8,946.2 1346.6,919.3 1346.6,1240.9 1315.8,1240.9 1286.0,1240.9 1255.2,1240.9 1225.4,1240.9 1194.6,1240.9 1163.8,1240.9 1134.0,1240.9 1103.2,1240.9 1073.4,1240.9 1042.6,1240.9 1013.8,1240.9 983.0,1240.9 952.2,1240.9 922.4,1240.9 891.6,1240.9 861.8,1240.9 831.0,1240.9 800.2,1240.9 770.4,1240.9 739.6,1240.9 709.8,1240.9 679.0,1240.9 651.1,1240.9 620.3,1240.9 589.5,1240.9 559.7,1240.9 528.9,1240.9 499.1,1240.9 468.3,1240.9 437.5,1240.9 407.7,1240.9 376.9,1240.9 347.1,1240.9 316.3,1240.9 288.5,1240.9" fill="#1f77b4" fill-opacity="0.5"/>
<polygon points="288.5,1028.2 316.3,991.8 347.1,969.4 376.9,1022.1 407.7,972.1 437.5,990.0 468.3,922.3 499.1,920.1 528.9,962.2 559.7,935.3 589.5,910.0 620.3,930.8 651.1,918.9 679.0,945.2 709.8,902.1 739.6,918.9 770.4,884.6 800.2,897.6 831.0,907.0 861.8,910.3 891.6,906.5 922.4,909.9 952.2,877.8 983.0,881.9 1013.8,910.3 1042.6,872.9 1073.4,857.2 1103.2,899.8 1134.0,834.0 1163.8,780.6 1194.6,779.0 1225.4,889.0 1255.2,841.3 1286.0,842.0 1315.8,807.5 1346.6,773.2 1346.6,919.3 1315.8,946.2 1286.0,983.7 1255.2,997.8 1225.4,1022.5 1194.6,945.1 1163.8,913.7 1134.0,993.3 1103.2,1035.9 1073.4,959.2 1042.6,987.7 1013.8,1037.1 983.0,1013.5 952.2,1014.6 922.4,1035.9 891.6,1013.1 861.8,1032.6 831.0,1015.7 800.2,1012.5 770.4,982.4 739.6,1019.2 709.8,1019.2 679.0,1031.1 651.1,1034.0 620.3,1058.0 589.5,1015.4 559.7,1015.4 528.9,1043.4 499.1,1027.3 468.3,1041.2 437.5,1077.5 407.7,1077.1 376.9,1099.0 347.1,1066.5 316.3,1072.1 288.5,1101.3" fill="#ff7f0e" fill-opacity="0.5"/>
<polygon points="288.5,891.2 316.3,887.2 347.1,820.6 376.9,868.8 407.7,783.1 437.5,854.2 468.3,781.4 499.1,741.0 528.9,804.9 559.7,760.0 589.5,775.1 620.3,763.4 651.1,731.6 679.0,758.9 709.8,720.4 739.6,794.8 770.4,705.1 800.2,775.7 831.0,658.4 861.8,696.5 891.6,711.8 922.4,718.9 952.2,665.8 983.0,676.3 1013.8,676.3 1042.6,674.5 1073.4,645.4 1103.2,713.3 1134.0,644.9 1163.8,638.2 1194.6,581.7 1225.4,649.4 1255.2,598.9 1286.0,619.1 1315.8,566.4 1346.6,547.4 1346.6,773.2 1315.8,807.5 1286.0,842.0 1255.2,841.3 1225.4,889.0 1194.6,779.0 1163.8,780.6 1134.0,834.0 1103.2,899.8 1073.4,857.2 1042.6,872.9 1013.8,910.3 983.0,881.9 952.2,877.8 922.4,909.9 891.6,906.5 861.8,910.3 831.0,907.0 800.2,897.6 770.4,884.6 739.6,918.9 709.8,902.1 679.0,945.2 651.1,918.9 620.3,930.8 589.5,910.0 559.7,935.3 528.9,962.2 499.1,920.1 468.3,922.3 437.5,990.0 407.7,972.1 376.9,1022.1 347.1,969.4 316.3,991.8 288.5,1028.2" fill="#2ca02c" fill-opacity="0.5"/>
<polygon points="288.5,806.5 316.3,810.1 347.1,770.1 376.9,801.5 407.7,719.0 437.5,784.7 468.3,717.4 499.1,696.1 528.9,743.7 559.7,694.3 589.5,684.5 620.3,686.0 651.1,657.6 679.0,679.3 709.8,663.6 739.6,701.7 770.4,609.1 800.2,700.2 831.0,574.9 861.8,627.4 891.6,625.9 922.4,634.2 952.2,578.1 983.0,579.9 1013.8,587.7 1042.6,586.2 1073.4,555.7 1103.2,604.6 1134.0,542.2 1163.8,531.6 1194.6,481.8 1225.4,537.6 1255.2,532.9 1286.0,505.7 1315.8,472.5 1346.6,441.2 1346.6,547.4 1315.8,566.4 1286.0,619.1 1255.2,598.9 1225.4,649.4 1194.6,581.7 1163.8,638.2 1134.0,644.9 1103.2,713.3 1073.4,645.4 1042.6,674.5 1013.8,676.3 983.0,676.3 952.2,665.8 922.4,718.9 891.6,711.8 861.8,696.5 831.0,658.4 800.2,775.7 770.4,705.1 739.6,794.8 709.8,720.4 679.0,758.9 651.1,731.6 620.3,763.4 589.5,775.1 559.7,760.0 528.9,804.9 499.1,741.0 468.3,781.4 437.5,854.2 407.7,783.1 376.9,868.8 347.1,820.6 316.3,887.2 288.5,891.2" fill="#d62728" fill-opacity="0.5"/>
<polyline points="288.5,1101.3 316.3,1072.1 347.1,1066.5 376.9,1099.0 407.7,1077.1 437.5,1077.5 468.3,1041.2 499.1,1027.3 528.9,1043.4 559.7,1015.4 589.5,1015.4 620.3,1058.0 651.1,1034.0 679.0,1031.1 709.8,1019.2 739.6,1019.2 770.4,982.4 800.2,1012.5 831.0,1015.7 861.8,1032.6 891.6,1013.1 922.4,1035.9 952.2,1014.6 983.0,1013.5 1013.8,1037.1 1042.6,987.7 1073.4,959.2 1103.2,1035.9 1134.0,993.3 1163.8,913.7 1194.6,945.1 1225.4,1022.5 1255.2,997.8 1286.0,983.7 1315.8,946.2 1346.6,919.3" fill="none" stroke="#1f77b4" stroke-width="6.0" stroke-linejoin="miter" stroke-miterlimit="2"/>
<polyline points="288.5,1028.2 316.3,991.8 347.1,969.4 376.9,1022.1 407.7,972.1 437.5,990.0 468.3,922.3 499.1,920.1 528.9,962.2 559.7,935.3 589.5,910.0 620.3,930.8 651.1,918.9 679.0,945.2 709.8,902.1 739.6,918.9 770.4,884.6 800.2,897.6 831.0,907.0 861.8,910.3 891.6,906.5 922.4,909.9 952.2,877.8 983.0,881.9 1013.8,910.3 1042.6,872.9 1073.4,857.2 1103.2,899.8 1134.0,834.0 1163.8,780.6 1194.6,779.0 1225.4,889.0 1255.2,841.3 1286.0,842.0 1315.8,807.5 1346.6,773.2" fill="none" stroke="#ff7f0e" stroke-width="6.0" stroke-linejoin="miter" stroke-miterlimit="2"/>
<polyline points="288.5,891.2 316.3,887.2 347.1,820.6 376.9,868.8 407.7,783.1 437.5,854.2 468.3,781.4 499.1,741.0 528.9,804.9 559.7,760.0 589.5,775.1 620.3,763.4 651.1,731.6 679.0,758.9 709.8,720.4 739.6,794.8 770.4,705.1 800.2,775.7 831.0,658.4 861.8,696.5 891.6,711.8 922.4,718.9 952.2,665.8 983.0,676.3 1013.8,676.3 1042.6,674.5 1073.4,645.4 1103.2,713.3 1134.0,644.9 1163.8,638.2 1194.6,581.7 1225.4,649.4 1255.2,598.9 1286.0,619.1 1315.8,566.4 1346.6,547.4" fill="none" stroke="#2ca02c" stroke-width="6.0" stroke-linejoin="miter" stroke-miterlimit="2"/>
<polyline points="288.5,806.5 316.3,810.1 347.1,770.1 376.9,801.5 407.7,719.0 437.5,784.7 468.3,717.4 499.1,696.1 528.9,743.7 559.7,694.3 589.5,684.5 620.3,686.0 651.1,657.6 679.0,679.3 709.8,663.6 739.6,701.7 770.4,609.1 800.2,700.2 831.0,574.9 861.8,627.4 891.6,625.9 922.4,634.2 952.2,578.1 983.0,579.9 1013.8,587.7 1042.6,586.2 1073.4,555.7 1103.2,604.6 1134.0,542.2 1163.8,531.6 1194.6,481.8 1225.4,537.6 1255.2,532.9 1286.0,505.7 1315.8,472.5 1346.6,441.2" fill="none" stroke="#d62728" stroke-width="6.0" stroke-linejoin="miter" stroke-miterlimit="2"/>
</g>
<text x="285.4" y="1250.7" font-size="27.0" text-anchor="end" fill="#3a4f72" textLength="30.6" lengthAdjust="spacingAndGlyphs">$0</text>
<text x="285.4" y="1115.8" font-size="27.0" text-anchor="end" fill="#3a4f72" textLength="87.0" lengthAdjust="spacingAndGlyphs">$2,000</text>
<text x="285.4" y="980.9" font-size="27.0" text-anchor="end" fill="#3a4f72" textLength="87.0" lengthAdjust="spacingAndGlyphs">$4,000</text>
<text x="285.4" y="846.0" font-size="27.0" text-anchor="end" fill="#3a4f72" textLength="87.0" lengthAdjust="spacingAndGlyphs">$6,000</text>
<text x="285.4" y="711.1" font-size="27.0" text-anchor="end" fill="#3a4f72" textLength="87.0" lengthAdjust="spacingAndGlyphs">$8,000</text>
<text x="285.4" y="576.2" font-size="27.0" text-anchor="end" fill="#3a4f72" textLength="102.6" lengthAdjust="spacingAndGlyphs">$10,000</text>
<text x="285.4" y="441.3" font-size="27.0" text-anchor="end" fill="#3a4f72" textLength="102.6" lengthAdjust="spacingAndGlyphs">$12,000</text>
<text x="438.5" y="1271.2" font-size="27.0" text-anchor="middle" fill="#3a4f72" textLength="105.2" lengthAdjust="spacingAndGlyphs">Jul 2022</text>
<text x="621.3" y="1271.2" font-size="27.0" text-anchor="middle" fill="#3a4f72" textLength="112.6" lengthAdjust="spacingAndGlyphs">Jan 2023</text>
<text x="801.2" y="1271.2" font-size="27.0" text-anchor="middle" fill="#3a4f72" textLength="105.2" lengthAdjust="spacingAndGlyphs">Jul 2023</text>
<text x="984.0" y="1271.2" font-size="27.0" text-anchor="middle" fill="#3a4f72" textLength="112.6" lengthAdjust="spacingAndGlyphs">Jan 2024</text>
<text x="1164.8" y="1271.2" font-size="27.0" text-anchor="middle" fill="#3a4f72" textLength="105.2" lengthAdjust="spacingAndGlyphs">Jul 2024</text>
<text x="817.8" y="1333.6" font-size="37.2" text-anchor="middle" fill="#3a4f72" textLength="80.5" lengthAdjust="spacingAndGlyphs">Date</text>
<text transform="translate(141.4,819.2) rotate(-90)" font-size="36.8" text-anchor="middle" fill="#3a4f72" textLength="139" lengthAdjust="spacingAndGlyphs">Sales ($)</text>
<text x="413.8" y="292.3" font-size="47" text-anchor="start" fill="#141414" textLength="784.0" lengthAdjust="spacingAndGlyphs">Monthly Sales by Product Category</text>
<rect x="416.6" y="343.0" width="60" height="11.8" fill="#d62728" fill-opacity="0.5"/>
<line x1="416.6" x2="476.6" y1="343.3" y2="343.3" stroke="#d62728" stroke-width="6.4"/>
<text x="485.9" y="360.0" font-size="32" text-anchor="start" fill="#3a4f72" textLength="92.5" lengthAdjust="spacingAndGlyphs">Books</text>
<rect x="598.3" y="343.0" width="60" height="11.8" fill="#2ca02c" fill-opacity="0.5"/>
<line x1="598.3" x2="658.3" y1="343.3" y2="343.3" stroke="#2ca02c" stroke-width="6.4"/>
<text x="667.4" y="360.0" font-size="32" text-anchor="start" fill="#3a4f72" textLength="91.5" lengthAdjust="spacingAndGlyphs">Home</text>
<rect x="780.0" y="343.0" width="60" height="11.8" fill="#ff7f0e" fill-opacity="0.5"/>
<line x1="780.0" x2="840.0" y1="343.3" y2="343.3" stroke="#ff7f0e" stroke-width="6.4"/>
<text x="849.6" y="360.0" font-size="32" text-anchor="start" fill="#3a4f72" textLength="116.5" lengthAdjust="spacingAndGlyphs">Apparel</text>
<rect x="986.4" y="343.0" width="60" height="11.8" fill="#1f77b4" fill-opacity="0.5"/>
<line x1="986.4" x2="1046.4" y1="343.3" y2="343.3" stroke="#1f77b4" stroke-width="6.4"/>
<text x="1056.1" y="360.0" font-size="32" text-anchor="start" fill="#3a4f72" textLength="162.0" lengthAdjust="spacingAndGlyphs">Electronics</text>
</svg>
</div>
<span class="t" id="h1" style="left:562.8px;top:161.9px;font-size:29.0px;color:#262626;transform:scaleX(1.0279);">Monthly Sales by Product Category:</span>
<div class="hr" style="left:564.6px;top:257.7px;width:1403.5px;height:1.7px;background:#eaeaea"></div>
<span class="t" id="h2" style="left:564.2px;top:1485.8px;font-size:29.0px;color:#262626;transform:scaleX(1.0072);">Weekly Sales Pattern:</span>
<div class="abs" style="left:1249.5px;top:1450px;width:55px;height:55px;border-radius:50%;background:#fff;border:1.5px solid #e4e4e7"></div>
<svg style="position:absolute;left:1262.0px;top:1462.5px;" width="30" height="30" viewBox="0 0 24 24" fill="none" stroke="#171717" stroke-width="2" stroke-linecap="round" stroke-linejoin="round"><path d="M12 5v14"/><path d="m19 12-7 7-7-7"/></svg>
<div class="abs" style="left:2078px;top:1493px;width:10px;height:40.5px;border-radius:5px;background:#8a8a8a"></div>
<div class="abs" style="left:556px;top:1540px;width:1443px;height:151.5px;border-radius:38px;background:#fff;border:1.8px solid #e2e6ef;box-shadow:0 22px 40px -8px rgba(0,0,0,.20),0 6px 14px -4px rgba(0,0,0,.07)"></div>
<div class="pill" style="left:584.5px;width:171px"></div>
<span class="t" id="pj" style="left:607.3px;top:1568.0px;font-size:22.5px;color:#1d5cf0;font-weight:700;">J</span>
<span class="t" id="p0" style="left:633.8px;top:1568.5px;font-size:21.7px;color:#2e2e2e;transform:scaleX(1.0246);-webkit-text-stroke:0.32px #2e2e2e;">Default</span>
<svg style="position:absolute;left:714.5px;top:1568.0px;" width="24" height="24" viewBox="0 0 24 24" fill="none" stroke="#858585" stroke-width="1.7" stroke-linecap="round" stroke-linejoin="round"><path d="m6 9 6 6 6-6"/></svg>
<div class="pill" style="left:770.5px;width:111px"></div>
<svg style="position:absolute;left:785.5px;top:1570.5px;" width="21" height="21" viewBox="0 0 24 24" fill="none" stroke="#2e2e2e" stroke-width="1.9" stroke-linecap="round" stroke-linejoin="round"><path d="M14.7 6.3a1 1 0 0 0 0 1.4l1.6 1.6a1 1 0 0 0 1.4 0l3.77-3.77a6 6 0 0 1-7.94 7.94l-6.91 6.91a2.12 2.12 0 0 1-3-3l6.91-6.91a6 6 0 0 1 7.94-7.94l-3.76 3.76z"/></svg>
<span class="t" id="p1" style="left:814.2px;top:1568.5px;font-size:21.7px;color:#2e2e2e;transform:scaleX(1.0230);-webkit-text-stroke:0.32px #2e2e2e;">Tools</span>
<div class="pill" style="left:896px;width:223.5px"></div>
<svg style="position:absolute;left:906.5px;top:1569.0px;" width="23" height="23" viewBox="0 0 24 24" fill="none" stroke="#2e2e2e" stroke-width="1.8" stroke-linecap="round" stroke-linejoin="round"><path d="m14.622 17.897-10.68-2.913"/><path d="M18.376 2.622a1 1 0 1 1 3.002 3.002L17.36 9.643a.5.5 0 0 0 0 .707l.944.944a2.41 2.41 0 0 1 0 3.408l-.944.944a.5.5 0 0 1-.707 0L8.354 7.348a.5.5 0 0 1 0-.707l.944-.944a2.41 2.41 0 0 1 3.408 0l.944.944a.5.5 0 0 0 .707 0z"/><path d="M9 8c-1.804 2.71-3.97 3.46-6.583 3.948a.507.507 0 0 0-.302.819l7.32 8.883a1 1 0 0 0 1.185.204C12.735 20.405 16 16.792 16 15"/></svg>
<span class="t" id="p2" style="left:943.2px;top:1568.5px;font-size:21.7px;color:#2e2e2e;transform:scaleX(1.0402);-webkit-text-stroke:0.32px #2e2e2e;">Julius Charts</span>
<svg style="position:absolute;left:1082.5px;top:1568.0px;" width="24" height="24" viewBox="0 0 24 24" fill="none" stroke="#858585" stroke-width="1.7" stroke-linecap="round" stroke-linejoin="round"><path d="m6 9 6 6 6-6"/></svg>
<div class="pill" style="left:1135.5px;width:254px"></div>
<span class="t" id="p3" style="left:1157.0px;top:1568.5px;font-size:21.7px;color:#2e2e2e;transform:scaleX(1.0234);-webkit-text-stroke:0.32px #2e2e2e;">Advanced Reasoning</span>
<div class="pill" style="left:1405px;width:209px"></div>
<svg style="position:absolute;left:1420.5px;top:1570.5px;" width="21" height="21" viewBox="0 0 24 24" fill="none" stroke="#2e2e2e" stroke-width="1.9" stroke-linecap="round" stroke-linejoin="round"><path d="m19 21-7-4-7 4V5a2 2 0 0 1 2-2h10a2 2 0 0 1 2 2v16z"/></svg>
<span class="t" id="p4" style="left:1447.0px;top:1568.5px;font-size:21.7px;color:#2e2e2e;transform:scaleX(1.0151);-webkit-text-stroke:0.32px #2e2e2e;">Saved Prompts</span>
<div class="abs" style="left:1169px;top:1692.5px;width:9px;height:2px;border-radius:1px;background:#5a5a5a"></div>
<svg class="abs" style="left:591px;top:1626px" width="28" height="42" viewBox="0 0 28 42" fill="none" stroke="#475569" stroke-width="2.6" stroke-linecap="round"><path d="M22.6 11.5V27.5a8.6 8.6 0 0 1-17.2 0V11.5a6.2 6.2 0 0 1 12.4 0V27a3.8 3.8 0 0 1-7.6 0V13"/></svg>
<div class="abs" style="left:1915px;top:1619px;width:55px;height:55px;border-radius:50%;background:#93acf6"></div>
<svg style="position:absolute;left:1929.5px;top:1633.5px;" width="26" height="26" viewBox="0 0 24 24" fill="none" stroke="#fff" stroke-width="1.8" stroke-linecap="round" stroke-linejoin="round"><path d="m5 12 7-7 7 7"/><path d="M12 19V5"/></svg>
<div class="abs" style="left:0;top:1645px;width:2700px;height:62px;background:linear-gradient(to bottom,rgba(0,0,0,0),rgba(0,0,0,.022) 50%,rgba(0,0,0,.07));-webkit-mask-image:linear-gradient(to right,#000 0,#000 1900px,transparent 2600px);mask-image:linear-gradient(to right,#000 0,#000 1900px,transparent 2600px);pointer-events:none"></div>
</div><div id="winb"></div></body></html>
